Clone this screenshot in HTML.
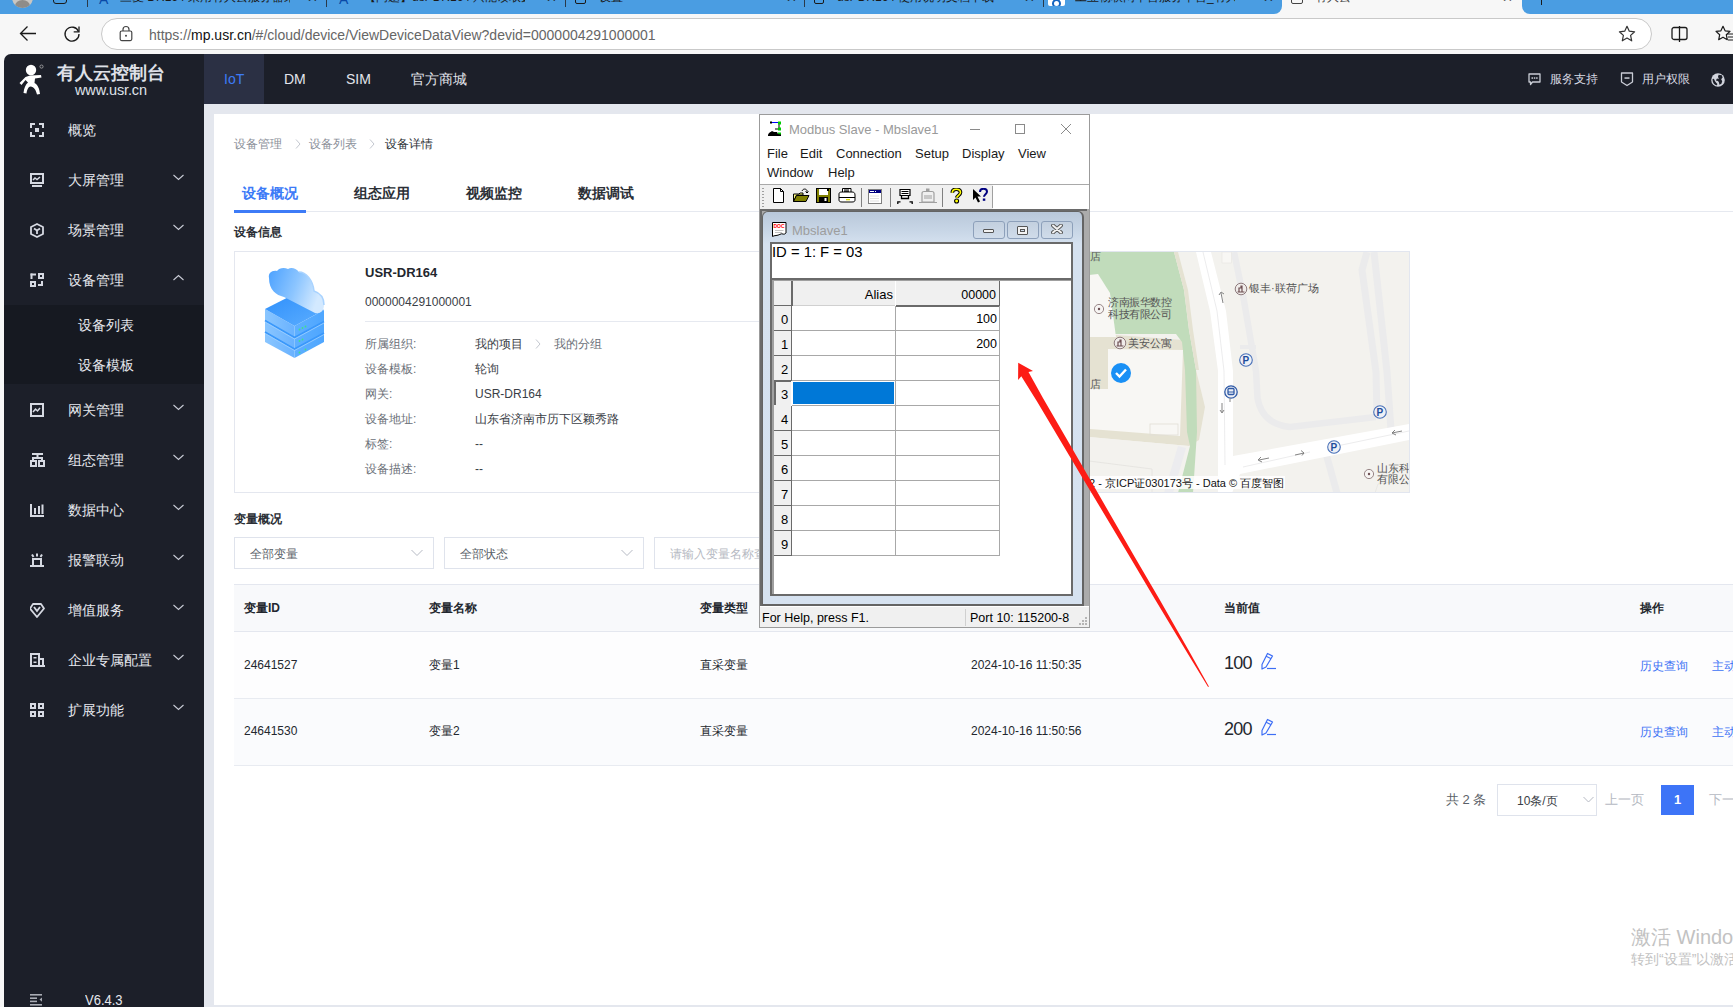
<!DOCTYPE html>
<html><head><meta charset="utf-8">
<style>
*{margin:0;padding:0;box-sizing:border-box}
html,body{width:1733px;height:1007px;overflow:hidden;background:#f7f7f7;font-family:"Liberation Sans",sans-serif;position:relative}
.a{position:absolute;white-space:nowrap}
/* browser */
#tabs{left:0;top:0;width:1733px;height:14px;background:#f7f7f7;overflow:hidden}
.tb{position:absolute;top:-4px;height:18px;background:#4a9de2}
#addr{left:0;top:14px;width:1733px;height:40px;background:#f7f7f7}
#url{left:101px;top:18px;width:1551px;height:32px;border:1px solid #c9c9c9;border-radius:16px;background:#fff}
/* app */
#app{left:4px;top:54px;width:1729px;height:953px;background:#e4e7ee;border-top-left-radius:7px;overflow:hidden}
#hdr{left:0;top:0;width:1729px;height:50px;background:#1c1f29}
#side{left:0;top:50px;width:200px;height:903px;background:#1c1f29}
.mi{position:absolute;left:0;width:200px;height:50px;color:#e6e8ee;font-size:14px}
.mi .t{position:absolute;left:64px;top:17px;line-height:16px}
.mi svg.ic{position:absolute;left:26px;top:18px}
.mi svg.ch{position:absolute;left:169px;top:19px}
#card{left:210px;top:60px;width:1519px;height:892px;background:#fff}
</style></head><body>
<div class="a" id="tabs">
  <div class="tb" style="left:0;width:1282px;border-bottom-right-radius:8px"></div>
  <div class="tb" style="left:1522px;width:211px;border-bottom-left-radius:8px"></div>
  <div class="a" style="left:12px;top:-13px;width:21px;height:21px;border-radius:50%;background:#c9c6c2;overflow:hidden"><div style="position:absolute;left:3px;top:13px;width:15px;height:12px;border-radius:50%;background:#8f8c88"></div></div>
  <div class="a" style="left:53px;top:-8px;width:14px;height:12px;border:1.5px solid #1a1a1a;border-radius:3px"></div>
  <div class="a" style="left:87px;top:0;width:1px;height:7px;background:#2a3a4a"></div>
  <div class="a" style="left:99px;top:-9px;font-size:14px;line-height:16px;color:#0b4aa8">A</div>
  <div class="a" style="left:120px;top:-10px;width:170px;overflow:hidden;font-size:12px;line-height:14px;color:#1a1a1a">三菱 DR164 采用有人云服务器采集数据的方法</div>
  <div class="a" style="left:307px;top:-9px;font-size:13px;line-height:14px;color:#1a1a1a">✕</div>
  <div class="a" style="left:326px;top:0;width:1px;height:7px;background:#2a3a4a"></div>
  <div class="a" style="left:339px;top:-9px;font-size:14px;line-height:16px;color:#0b4aa8">A</div>
  <div class="a" style="left:364px;top:-10px;width:161px;overflow:hidden;font-size:12px;line-height:14px;color:#1a1a1a">【问题】usr-DR164 只能读取数据</div>
  <div class="a" style="left:546px;top:-9px;font-size:13px;line-height:14px;color:#1a1a1a">✕</div>
  <div class="a" style="left:565px;top:0;width:1px;height:7px;background:#2a3a4a"></div>
  <div class="a" style="left:575px;top:-8px;width:11px;height:12px;border:1.5px solid #1a1a1a;border-radius:2px"></div>
  <div class="a" style="left:599px;top:-10px;font-size:12px;line-height:14px;color:#1a1a1a">设置</div>
  <div class="a" style="left:786px;top:-9px;font-size:13px;line-height:14px;color:#1a1a1a">✕</div>
  <div class="a" style="left:804px;top:0;width:1px;height:7px;background:#2a3a4a"></div>
  <div class="a" style="left:814px;top:-8px;width:10px;height:12px;border:1.5px solid #1a1a1a;border-radius:2px"></div>
  <div class="a" style="left:837px;top:-10px;width:178px;overflow:hidden;font-size:12px;line-height:14px;color:#1a1a1a">usr-DR164 使用说明文档下载</div>
  <div class="a" style="left:1024px;top:-9px;font-size:13px;line-height:14px;color:#1a1a1a">✕</div>
  <div class="a" style="left:1043px;top:0;width:1px;height:7px;background:#2a3a4a"></div>
  <div class="a" style="left:1048px;top:-4px;width:17px;height:10px;background:#fff;border-radius:2px;overflow:hidden"><div style="position:absolute;left:4px;top:3px;width:9px;height:9px;border-radius:50%;border:2px solid #1565c0"></div></div>
  <div class="a" style="left:1075px;top:-10px;width:160px;overflow:hidden;font-size:12px;line-height:14px;color:#1a1a1a">工业物联网平台服务平台_有人物联</div>
  <div class="a" style="left:1263px;top:-9px;font-size:13px;line-height:14px;color:#1a1a1a">✕</div>
  <div class="a" style="left:1291px;top:-8px;width:12px;height:12px;border:1.5px solid #444;border-radius:2px"></div>
  <div class="a" style="left:1315px;top:-10px;font-size:12px;line-height:14px;color:#444">有人云</div>
  <div class="a" style="left:1502px;top:-9px;font-size:13px;line-height:14px;color:#444">✕</div>
  <div class="a" style="left:1541px;top:0;width:1px;height:5px;background:#1a1a1a"></div>
</div>
<div class="a" id="addr"></div>
<div class="a" id="url"></div>
<svg class="a" style="left:19px;top:25px" width="18" height="17" viewBox="0 0 18 17"><path d="M17 8.5 H2 M8.5 1.5 L1.5 8.5 L8.5 15.5" fill="none" stroke="#1a1a1a" stroke-width="1.3"/></svg>
<svg class="a" style="left:63px;top:25px" width="18" height="18" viewBox="0 0 18 18"><path d="M15.5 6.5 A7 7 0 1 0 16 9" fill="none" stroke="#1a1a1a" stroke-width="1.3"/><path d="M16 1.5 V6.8 H10.7" fill="none" stroke="#1a1a1a" stroke-width="1.3"/></svg>
<svg class="a" style="left:119px;top:25px" width="14" height="17" viewBox="0 0 14 17"><rect x="1.2" y="6" width="11.6" height="9.6" rx="1.5" fill="none" stroke="#444" stroke-width="1.2"/><path d="M4 6 V4.5 A3 3 0 0 1 10 4.5 V6" fill="none" stroke="#444" stroke-width="1.2"/><circle cx="7" cy="10.8" r="1" fill="#444"/></svg>
<svg class="a" style="left:1618px;top:25px" width="18" height="18" viewBox="0 0 18 18"><path d="M9 1.3 L11.3 6.2 L16.6 6.8 L12.6 10.4 L13.7 15.8 L9 13.1 L4.3 15.8 L5.4 10.4 L1.4 6.8 L6.7 6.2 Z" fill="none" stroke="#333" stroke-width="1.2" stroke-linejoin="round"/></svg>
<svg class="a" style="left:1671px;top:26px" width="17" height="16" viewBox="0 0 17 16"><rect x="1" y="1.5" width="15" height="12" rx="2" fill="none" stroke="#1a1a1a" stroke-width="1.3"/><path d="M8.5 0 V16" stroke="#1a1a1a" stroke-width="1.3"/></svg>
<svg class="a" style="left:1715px;top:25px" width="18" height="18" viewBox="0 0 18 18"><path d="M8 1.3 L10.1 5.8 L15 6.4 L11.3 9.7 L12.3 14.7 L8 12.2 L3.7 14.7 L4.7 9.7 L1 6.4 L5.9 5.8 Z" fill="none" stroke="#1a1a1a" stroke-width="1.2" stroke-linejoin="round"/><path d="M12 9 H18 M13 12 H18 M13 15 H18" stroke="#1a1a1a" stroke-width="1.2"/></svg>

<div class="a" style="left:149px;top:26px;font-size:14px;line-height:18px;color:#666">https://<span style="color:#111">mp.usr.cn</span>/#/cloud/device/ViewDeviceDataView?devid=0000004291000001</div>

<div class="a" id="app">
  <div class="a" id="hdr"></div>
<svg class="a" style="left:14px;top:9px" width="30" height="33" viewBox="0 0 30 33">
 <circle cx="13" cy="7" r="5.2" fill="#fff"/>
 <circle cx="23.5" cy="3.6" r="1.6" fill="none" stroke="#bbb" stroke-width="0.7"/>
 <path d="M1.5 20 L7.5 14 L12 12.5 L23 12 L23.5 14.5 L17 15.5 L16.5 20 C20 22 21.5 26 22 31 L19 31.5 C18 27 16 24 12.5 23.5 C10 24 9 27 8.5 30.5 L5.5 30 C6 25 7.5 21.5 10 19.5 L7.5 17 L3.5 22 Z" fill="#fff"/>
</svg>
<div class="a" style="left:53px;top:9px;font-size:18px;line-height:20px;font-weight:bold;color:#dfe1e8">有人云控制台</div>
<div class="a" style="left:71px;top:28px;font-size:14.5px;line-height:16px;color:#dfe1e8;letter-spacing:-0.15px">www.usr.cn</div>
<div class="a" style="left:200px;top:0;width:60px;height:50px;background:#2b3044"></div>
<div class="a" style="left:220px;top:17px;font-size:14px;line-height:16px;color:#3d7bf7">IoT</div>
<div class="a" style="left:280px;top:17px;font-size:14px;line-height:16px;color:#e3e5ec">DM</div>
<div class="a" style="left:342px;top:17px;font-size:14px;line-height:16px;color:#e3e5ec">SIM</div>
<div class="a" style="left:407px;top:17px;font-size:14px;line-height:16px;color:#e3e5ec">官方商城</div>
<svg class="a" style="left:1524px;top:19px" width="13" height="13" viewBox="0 0 13 13"><path d="M1 1 H12 V9 H4.5 L2.5 11.5 V9 H1 Z" fill="none" stroke="#c9ccd5" stroke-width="1.3" stroke-linejoin="round"/><rect x="3.5" y="4.3" width="1.5" height="1.5" fill="#c9ccd5"/><rect x="5.8" y="4.3" width="1.5" height="1.5" fill="#c9ccd5"/><rect x="8.1" y="4.3" width="1.5" height="1.5" fill="#c9ccd5"/></svg>
<div class="a" style="left:1546px;top:17px;font-size:12px;line-height:16px;color:#d8dae2">服务支持</div>
<svg class="a" style="left:1616px;top:18px" width="14" height="15" viewBox="0 0 14 15"><path d="M1.5 1 H12.5 V10 L7 13.5 L1.5 10 Z" fill="none" stroke="#c9ccd5" stroke-width="1.3" stroke-linejoin="round"/><rect x="4.5" y="5.3" width="5" height="1.5" fill="#c9ccd5"/></svg>
<div class="a" style="left:1638px;top:17px;font-size:12px;line-height:16px;color:#d8dae2">用户权限</div>
<svg class="a" style="left:1707px;top:18.5px" width="14" height="14" viewBox="0 0 14 14"><circle cx="7" cy="7" r="6.8" fill="#d0d3dc"/><path d="M1.5 6 L3 5.8 C3.5 8 5 9.8 6.5 11 L5.5 12.6 C3 11.5 1.4 9.5 1.5 6 Z" fill="#1c1f29"/><path d="M7.6 1.8 L10.8 2.3 L11.6 4.6 L10.2 6.2 L11.2 8.3 L10.4 10.8 L8.4 11.8 L8 9.4 L7 8 L4.8 7.4 L6 5.6 L7.8 5.9 L7 3.8 Z" fill="#1c1f29"/></svg>
  <div class="a" id="side"></div>
<div class="a" style="left:0;top:251px;width:200px;height:79px;background:#161921"></div><div class="mi" style="top:246px"><span class="t" style="left:74px">设备列表</span></div><div class="mi" style="top:286px"><span class="t" style="left:74px">设备模板</span></div><div class="mi" style="top:51px"><svg class="ic" width="15" height="15" viewBox="0 0 15 15" fill="#d6d9e2"><rect x="0" y="0" width="5" height="2"/><rect x="0" y="0" width="2" height="5"/><rect x="9" y="0" width="5" height="2"/><rect x="12" y="0" width="2" height="5"/><rect x="0" y="12" width="5" height="2"/><rect x="0" y="9" width="2" height="5"/><rect x="9" y="12" width="5" height="2"/><rect x="12" y="9" width="2" height="5"/><rect x="5" y="5" width="4" height="4"/></svg><span class="t">概览</span></div>
<div class="mi" style="top:101px"><svg class="ic" width="15" height="15" viewBox="0 0 15 15" fill="#d6d9e2"><rect x="1" y="1" width="12" height="9" fill="none" stroke="#d6d9e2" stroke-width="2"/><path d="M3 7 L5 5 L7 6.5 L10 4" fill="none" stroke="#d6d9e2" stroke-width="1.5"/><rect x="2" y="12" width="10" height="2"/></svg><span class="t">大屏管理</span><svg class="ch" width="11" height="7" viewBox="0 0 11 7"><path d="M0.5 1 L5.5 5.5 L10.5 1" fill="none" stroke="#c9ccd6" stroke-width="1.1"/></svg></div>
<div class="mi" style="top:151px"><svg class="ic" width="15" height="15" viewBox="0 0 15 15" fill="#d6d9e2"><path d="M7 1 L13 4 L13 11 L7 14 L1 11 L1 4 Z" fill="none" stroke="#d6d9e2" stroke-width="1.8" stroke-linejoin="round"/><path d="M4 5.5 L7 7.5 L10 5.5 M7 7.5 V11" fill="none" stroke="#d6d9e2" stroke-width="1.8"/></svg><span class="t">场景管理</span><svg class="ch" width="11" height="7" viewBox="0 0 11 7"><path d="M0.5 1 L5.5 5.5 L10.5 1" fill="none" stroke="#c9ccd6" stroke-width="1.1"/></svg></div>
<div class="mi" style="top:201px"><svg class="ic" width="15" height="15" viewBox="0 0 15 15" fill="#d6d9e2"><rect x="0.5" y="0.5" width="5.5" height="2"/><rect x="0.5" y="0.5" width="2" height="5.5"/><path d="M8 0 H14 V6 H8 Z M10 2 V4 H12 V2 Z" fill-rule="evenodd"/><path d="M0 8 H6 V14 H0 Z M2 10 V12 H4 V10 Z" fill-rule="evenodd"/><rect x="8" y="11" width="5" height="2"/><rect x="11" y="8" width="2" height="5"/></svg><span class="t">设备管理</span><svg class="ch" width="11" height="7" viewBox="0 0 11 7"><path d="M0.5 6 L5.5 1.5 L10.5 6" fill="none" stroke="#c9ccd6" stroke-width="1.1"/></svg></div>
<div class="mi" style="top:331px"><svg class="ic" width="15" height="15" viewBox="0 0 15 15" fill="#d6d9e2"><rect x="1" y="1" width="12" height="12" fill="none" stroke="#d6d9e2" stroke-width="2"/><path d="M3 9 L5.5 6 L7.5 8 L10 5" fill="none" stroke="#d6d9e2" stroke-width="1.5"/></svg><span class="t">网关管理</span><svg class="ch" width="11" height="7" viewBox="0 0 11 7"><path d="M0.5 1 L5.5 5.5 L10.5 1" fill="none" stroke="#c9ccd6" stroke-width="1.1"/></svg></div>
<div class="mi" style="top:381px"><svg class="ic" width="15" height="15" viewBox="0 0 15 15" fill="#d6d9e2"><rect x="2" y="0" width="11" height="2"/><rect x="6.5" y="0" width="2" height="5"/><path d="M3 8 V5 H12 V8" fill="none" stroke="#d6d9e2" stroke-width="2"/><rect x="1" y="8" width="5" height="5" fill="none" stroke="#d6d9e2" stroke-width="2"/><rect x="9" y="8" width="5" height="5" fill="none" stroke="#d6d9e2" stroke-width="2"/></svg><span class="t">组态管理</span><svg class="ch" width="11" height="7" viewBox="0 0 11 7"><path d="M0.5 1 L5.5 5.5 L10.5 1" fill="none" stroke="#c9ccd6" stroke-width="1.1"/></svg></div>
<div class="mi" style="top:431px"><svg class="ic" width="15" height="15" viewBox="0 0 15 15" fill="#d6d9e2"><path d="M1 1 V13 H14" fill="none" stroke="#d6d9e2" stroke-width="2"/><rect x="4" y="5" width="2" height="6"/><rect x="8" y="3" width="2" height="8"/><rect x="11.5" y="1.5" width="2" height="9.5"/></svg><span class="t">数据中心</span><svg class="ch" width="11" height="7" viewBox="0 0 11 7"><path d="M0.5 1 L5.5 5.5 L10.5 1" fill="none" stroke="#c9ccd6" stroke-width="1.1"/></svg></div>
<div class="mi" style="top:481px"><svg class="ic" width="15" height="15" viewBox="0 0 15 15" fill="#d6d9e2"><path d="M2 1.5 L3.5 4 M7 0.5 V3.5 M12 1.5 L10.5 4" fill="none" stroke="#d6d9e2" stroke-width="2"/><path d="M3 13 V6 H11 V13" fill="none" stroke="#d6d9e2" stroke-width="2"/><rect x="0" y="12" width="14" height="2"/></svg><span class="t">报警联动</span><svg class="ch" width="11" height="7" viewBox="0 0 11 7"><path d="M0.5 1 L5.5 5.5 L10.5 1" fill="none" stroke="#c9ccd6" stroke-width="1.1"/></svg></div>
<div class="mi" style="top:531px"><svg class="ic" width="15" height="15" viewBox="0 0 15 15" fill="#d6d9e2"><path d="M3 1 H11 L14 5.5 L7 14 L0 5.5 Z" fill="none" stroke="#d6d9e2" stroke-width="1.8" stroke-linejoin="round"/><path d="M4 4 L7 8 L10 4" fill="none" stroke="#d6d9e2" stroke-width="1.8"/></svg><span class="t">增值服务</span><svg class="ch" width="11" height="7" viewBox="0 0 11 7"><path d="M0.5 1 L5.5 5.5 L10.5 1" fill="none" stroke="#c9ccd6" stroke-width="1.1"/></svg></div>
<div class="mi" style="top:581px"><svg class="ic" width="15" height="15" viewBox="0 0 15 15" fill="#d6d9e2"><path d="M0 13 H15 M1 13 V1 H9 V13 M9 6 H13 V13" fill="none" stroke="#d6d9e2" stroke-width="2"/><rect x="3.5" y="4" width="3" height="1.5"/><rect x="3.5" y="8.5" width="3" height="1.5"/></svg><span class="t">企业专属配置</span><svg class="ch" width="11" height="7" viewBox="0 0 11 7"><path d="M0.5 1 L5.5 5.5 L10.5 1" fill="none" stroke="#c9ccd6" stroke-width="1.1"/></svg></div>
<div class="mi" style="top:631px"><svg class="ic" width="15" height="15" viewBox="0 0 15 15" fill="#d6d9e2"><path d="M0 0 H6 V6 H0 Z M2 2 V4 H4 V2 Z M8 0 H14 V6 H8 Z M10 2 V4 H12 V2 Z M0 8 H6 V14 H0 Z M2 10 V12 H4 V10 Z M8 8 H14 V14 H8 Z M10 10 V12 H12 V10 Z" fill-rule="evenodd"/></svg><span class="t">扩展功能</span><svg class="ch" width="11" height="7" viewBox="0 0 11 7"><path d="M0.5 1 L5.5 5.5 L10.5 1" fill="none" stroke="#c9ccd6" stroke-width="1.1"/></svg></div><svg class="a" style="left:26px;top:940px" width="13" height="12" viewBox="0 0 13 12" fill="#a9acb4"><rect x="0" y="0" width="12" height="1.6"/><rect x="0" y="3.4" width="7" height="1.6"/><rect x="0" y="6.6" width="7" height="1.6"/><rect x="0" y="10" width="12" height="1.6"/><path d="M12 3.5 L9.5 5.6 L12 7.7Z"/></svg>
<div class="a" style="left:81px;top:938px;font-size:13px;line-height:16px;color:#e6e8ee;transform:scaleY(1.08);transform-origin:0 0">V6.4.3</div>
  <div class="a" id="card"></div>
</div>

<!-- content -->
<div class="a" style="left:234px;top:137px;font-size:12px;line-height:14px;color:#8a8f99">设备管理</div>
<svg class="a" style="left:295px;top:139px" width="6" height="10" viewBox="0 0 6 10"><path d="M1 0.5 L5 5 L1 9.5" fill="none" stroke="#c3c7cf" stroke-width="1"/></svg>
<div class="a" style="left:309px;top:137px;font-size:12px;line-height:14px;color:#8a8f99">设备列表</div>
<svg class="a" style="left:369px;top:139px" width="6" height="10" viewBox="0 0 6 10"><path d="M1 0.5 L5 5 L1 9.5" fill="none" stroke="#c3c7cf" stroke-width="1"/></svg>
<div class="a" style="left:385px;top:137px;font-size:12px;line-height:14px;color:#2b2f36">设备详情</div>

<div class="a" style="left:234px;top:211px;width:1499px;height:1px;background:#e6e9f0"></div>
<div class="a" style="left:234px;top:210px;width:72px;height:3px;background:#3d7bf7"></div>
<div class="a" style="left:242px;top:185px;font-size:14px;line-height:16px;font-weight:bold;color:#3d7bf7">设备概况</div>
<div class="a" style="left:354px;top:185px;font-size:14px;line-height:16px;font-weight:bold;color:#2b2f36">组态应用</div>
<div class="a" style="left:466px;top:185px;font-size:14px;line-height:16px;font-weight:bold;color:#2b2f36">视频监控</div>
<div class="a" style="left:578px;top:185px;font-size:14px;line-height:16px;font-weight:bold;color:#2b2f36">数据调试</div>

<div class="a" style="left:234px;top:225px;font-size:12px;line-height:14px;font-weight:bold;color:#2b2f36">设备信息</div>
<div class="a" style="left:234px;top:251px;width:1176px;height:242px;border:1px solid #e4e7ef"></div>

<!-- device icon placeholder -->
<svg class="a" style="left:262px;top:265px" width="66" height="96" viewBox="262 265 66 96">
<defs>
<linearGradient id="lf" x1="0" y1="0" x2="1" y2="0"><stop offset="0" stop-color="#8ac6ff"/><stop offset="1" stop-color="#69b2ff"/></linearGradient>
<linearGradient id="rf" x1="0" y1="0" x2="1" y2="0"><stop offset="0" stop-color="#5fb0ff"/><stop offset="1" stop-color="#4ea6ff"/></linearGradient>
<linearGradient id="tf" x1="0" y1="0" x2="1" y2="1"><stop offset="0" stop-color="#2e8ffb"/><stop offset="1" stop-color="#5caeff"/></linearGradient>
<linearGradient id="cl" x1="0" y1="0" x2="1" y2="0.3"><stop offset="0" stop-color="#4ba1ff"/><stop offset="0.55" stop-color="#8cc5ff"/><stop offset="1" stop-color="#d3e9ff"/></linearGradient>
</defs>
<polygon points="265,309 294.5,326 294.5,358 265,342" fill="url(#lf)"/>
<polygon points="294.5,326 324,310 324,342 294.5,358" fill="url(#rf)"/>
<polygon points="265,309 294.5,294 324,310 294.5,326" fill="url(#tf)"/>
<path d="M265 320.5 L294.5 337.5 L324 321.5 M265 332 L294.5 349 L324 333" fill="none" stroke="#3a98fb" stroke-width="1.8"/>
<path d="M265 322 L294.5 339 L324 323 M265 333.5 L294.5 350.5 L324 334.5" fill="none" stroke="#9fd0ff" stroke-width="0.8"/>
<g fill="#3fe08a"><circle cx="299.5" cy="329.5" r="0.9"/><circle cx="302.5" cy="328" r="0.9"/><circle cx="305.5" cy="326.5" r="0.9"/><circle cx="299.5" cy="341" r="0.9"/><circle cx="302.5" cy="339.5" r="0.9"/><circle cx="299.5" cy="352.5" r="0.9"/><circle cx="305.5" cy="349.5" r="0.9"/></g>
<path d="M269 278 C268 273 272 270 277 271 C279 268 284 267 288 269 C291 267 296 268 299 272 C306 272 313 280 314 291 C320 293 324 298 324 305 C324 311 320 314 315 313 L284 297 C276 295 269 290 269 278 Z" fill="url(#cl)"/>
<path d="M299 272 C306 272 313 280 314 291 C320 293 324 298 324 305" fill="none" stroke="#a9d3ff" stroke-width="1.5"/>
</svg>

<div class="a" style="left:365px;top:265px;font-size:13px;line-height:15px;font-weight:bold;color:#23272e">USR-DR164</div>
<div class="a" style="left:365px;top:295px;font-size:12px;line-height:14px;color:#3a3e46">0000004291000001</div>
<div class="a" style="left:365px;top:321px;width:724px;height:1px;background:#e6e9f0"></div>
<div class="a" style="left:365px;top:337px;font-size:12px;line-height:14px;color:#6b7078">所属组织:</div>
<div class="a" style="left:365px;top:362px;font-size:12px;line-height:14px;color:#6b7078">设备模板:</div>
<div class="a" style="left:365px;top:387px;font-size:12px;line-height:14px;color:#6b7078">网关:</div>
<div class="a" style="left:365px;top:412px;font-size:12px;line-height:14px;color:#6b7078">设备地址:</div>
<div class="a" style="left:365px;top:437px;font-size:12px;line-height:14px;color:#6b7078">标签:</div>
<div class="a" style="left:365px;top:462px;font-size:12px;line-height:14px;color:#6b7078">设备描述:</div>
<div class="a" style="left:475px;top:337px;font-size:12px;line-height:14px;color:#3a3e46">我的项目</div>
<div class="a" style="left:475px;top:362px;font-size:12px;line-height:14px;color:#3a3e46">轮询</div>
<div class="a" style="left:475px;top:387px;font-size:12px;line-height:14px;color:#3a3e46">USR-DR164</div>
<div class="a" style="left:475px;top:412px;font-size:12px;line-height:14px;color:#3a3e46">山东省济南市历下区颖秀路</div>
<div class="a" style="left:475px;top:437px;font-size:12px;line-height:14px;color:#3a3e46">--</div>
<div class="a" style="left:475px;top:462px;font-size:12px;line-height:14px;color:#3a3e46">--</div>
<svg class="a" style="left:535px;top:339px" width="6" height="10" viewBox="0 0 6 10"><path d="M1 0.5 L5 5 L1 9.5" fill="none" stroke="#c3c7cf" stroke-width="1"/></svg><div class="a" style="left:554px;top:337px;font-size:12px;line-height:14px;color:#6b7078">我的分组</div>
<svg class="a" style="left:0;top:0" width="1733" height="1007" viewBox="0 0 1733 1007">
<defs><clipPath id="mc"><rect x="1089" y="252" width="320" height="240"/></clipPath></defs>
<rect x="1088.5" y="251.5" width="321" height="241" fill="#f3f2ee" stroke="#e2e6ef" stroke-width="1"/>
<g clip-path="url(#mc)">
 <polygon points="1089,333 1183,340 1196,370 1205,407 1199,440 1189,446 1089,437" fill="#e5e2d2"/>
 <polygon points="1089,437 1189,446 1190,493 1089,493" fill="#f3f2ee"/>
 <polygon points="1089,252 1174,252 1184,290 1189,330 1196,370 1197,432 1193,493 1178,493 1190,446 1187,432 1185,370 1182,342 1176,334 1089,334" fill="#c1dcbb"/>
 <polygon points="1174,252 1178,252 1188,290 1193,330 1199,370 1196,370 1189,330 1184,290" fill="#e5e2d2"/>
 <polygon points="1089,275 1098,274 1110,293 1116,337 1089,337" fill="#f8f7f4"/>
 <polygon points="1108,349 1183,350 1180,436 1090,429 1090,389 1108,389" fill="#f8f7f4"/>
 <rect x="1150" y="424" width="28" height="11" fill="none" stroke="#e0ded6" stroke-width="0.8"/>
 <path d="M1089 461 L1152 469 L1152 493" fill="none" stroke="#e3e2de" stroke-width="0.8"/>
 <polygon points="1178,446 1186,448 1173,493 1164,493" fill="#ececef"/>
 <path d="M1234 252 L1243.6 298.5 L1256 371 L1257.5 398 Q1262 424 1290 427 L1376 417" fill="none" stroke="#ebebec" stroke-width="6.5"/>
 <rect x="1222" y="252" width="9.5" height="11" fill="#f8f7f4" stroke="#e6e5e1" stroke-width="0.6"/>
 <path d="M1367 252 L1362 270 L1376 372 L1377 417" fill="none" stroke="#ebebec" stroke-width="7"/>
 <path d="M1374 252 L1387 372 L1391 430" fill="none" stroke="#ebebec" stroke-width="7"/>
 <path d="M1240 347 L1256 347" stroke="#ebebec" stroke-width="4"/>
 <path d="M1325 450 L1337 493" stroke="#ebebec" stroke-width="7"/>
 <path d="M1375 493 L1378 484 L1392 482" fill="none" stroke="#e6e5e1" stroke-width="0.8"/>
 <polygon points="1196,252 1211,252 1226,311 1233,371 1233,456 1409,424 1409,440 1240,474 1232,493 1218,493 1218,371 1210,311" fill="#fff"/>
 <path d="M1203 252 L1217 311 L1224 371 L1225 465" fill="none" stroke="#e7e7e9" stroke-width="0.8"/>
 <path d="M1243 467 L1310 452 M1332 447 L1409 431" fill="none" stroke="#e7e7e9" stroke-width="0.8"/>
 <path d="M1221 293 L1223 303 M1219 295 L1221 292 L1224 294" fill="none" stroke="#777" stroke-width="0.9"/>
 <path d="M1222 403 L1222 412 M1220 410 L1222 413 L1224 410" fill="none" stroke="#777" stroke-width="0.9"/>
 <path d="M1259 460 L1269 458 M1261 457 L1258 460 L1262 462" fill="none" stroke="#777" stroke-width="0.9"/>
 <path d="M1295 455 L1304 453 M1301 450.5 L1304 453 L1302 455.5" fill="none" stroke="#777" stroke-width="0.9"/>
 <path d="M1392 433 L1402 431 M1395 430 L1392 433 L1396 435" fill="none" stroke="#777" stroke-width="0.9"/>
 <text x="1090" y="260" font-family="Liberation Sans" font-size="11" fill="#555">店</text>
 <circle cx="1099" cy="309" r="4.6" fill="#f7f5f3" stroke="#8d7a7c" stroke-width="0.9"/><circle cx="1099" cy="309" r="1.2" fill="#6d4f52"/>
 <text x="1108" y="306" font-family="Liberation Sans" font-size="11" fill="#555" letter-spacing="-0.4">济南振华数控</text>
 <text x="1108" y="318" font-family="Liberation Sans" font-size="11" fill="#555" letter-spacing="-0.4">科技有限公司</text>
 <circle cx="1120" cy="343" r="5.8" fill="#f0ecea" stroke="#8d7a7c" stroke-width="1"/><path d="M1116.5 346 H1123.5 M1118 346 V342 H1120 V340 H1121 V346" fill="none" stroke="#6d4f52" stroke-width="1.2"/>
 <text x="1128" y="347" font-family="Liberation Sans" font-size="11" fill="#555">美安公寓</text>
 <text x="1090" y="388" font-family="Liberation Sans" font-size="11" fill="#555">店</text>
 <circle cx="1241" cy="289" r="5.8" fill="#f0ecea" stroke="#8d7a7c" stroke-width="1"/><path d="M1237.5 292 H1244.5 M1239 292 V288 H1241 V286 H1242 V292" fill="none" stroke="#6d4f52" stroke-width="1.2"/>
 <text x="1249" y="292" font-family="Liberation Sans" font-size="11" fill="#555">银丰·联荷广场</text>
 <circle cx="1369" cy="474" r="4.6" fill="#f7f5f3" stroke="#8d7a7c" stroke-width="0.9"/><circle cx="1369" cy="474" r="1.2" fill="#6d4f52"/>
 <text x="1377" y="472" font-family="Liberation Sans" font-size="11" fill="#555">山东科技</text>
 <text x="1377" y="483" font-family="Liberation Sans" font-size="11" fill="#555">有限公司</text>
 <circle cx="1246" cy="360" r="6.3" fill="#eef0f6" stroke="#4a72b8" stroke-width="1.1"/><text x="1242.6" y="363.6" font-family="Liberation Sans" font-weight="bold" font-size="10" fill="#1d4d9c">P</text><circle cx="1380" cy="412" r="6.3" fill="#eef0f6" stroke="#4a72b8" stroke-width="1.1"/><text x="1376.6" y="415.6" font-family="Liberation Sans" font-weight="bold" font-size="10" fill="#1d4d9c">P</text><circle cx="1334" cy="447" r="6.3" fill="#eef0f6" stroke="#4a72b8" stroke-width="1.1"/><text x="1330.6" y="450.6" font-family="Liberation Sans" font-weight="bold" font-size="10" fill="#1d4d9c">P</text>
 <circle cx="1231" cy="392" r="6.2" fill="#eef0f6" stroke="#2f5aa6" stroke-width="1.3"/><rect x="1228" y="388.5" width="6" height="6" rx="1" fill="none" stroke="#2f5aa6" stroke-width="1.3"/><path d="M1228 392 H1234" stroke="#2f5aa6" stroke-width="1"/><path d="M1230 398 V402" stroke="#888" stroke-width="1"/>
 <circle cx="1121" cy="373" r="10" fill="#1a90f5"/><path d="M1116 373 L1119.5 376.5 L1126 369.5" fill="none" stroke="#fff" stroke-width="2.4"/>
 <rect x="1089" y="476" width="196" height="13" fill="#fff" fill-opacity="0.85"/>
 <text x="1089" y="487" font-family="Liberation Sans" font-size="11" fill="#111">2 - 京ICP证030173号 - Data © 百度智图</text>
</g>
</svg>

<div class="a" style="left:234px;top:512px;font-size:12px;line-height:14px;font-weight:bold;color:#2b2f36">变量概况</div>
<div class="a" style="left:234px;top:537px;width:200px;height:32px;border:1px solid #dfe3ec"></div>
<div class="a" style="left:250px;top:547px;font-size:12px;line-height:14px;color:#5a5f68">全部变量</div>
<svg class="a" style="left:411px;top:549px" width="12" height="8" viewBox="0 0 12 8"><path d="M0.5 1 L6 6.5 L11.5 1" fill="none" stroke="#b5b9c3" stroke-width="1"/></svg>
<div class="a" style="left:444px;top:537px;width:200px;height:32px;border:1px solid #dfe3ec"></div>
<div class="a" style="left:460px;top:547px;font-size:12px;line-height:14px;color:#5a5f68">全部状态</div>
<svg class="a" style="left:621px;top:549px" width="12" height="8" viewBox="0 0 12 8"><path d="M0.5 1 L6 6.5 L11.5 1" fill="none" stroke="#b5b9c3" stroke-width="1"/></svg>
<div class="a" style="left:654px;top:537px;width:200px;height:32px;border:1px solid #dfe3ec"></div>
<div class="a" style="left:670px;top:547px;font-size:12px;line-height:14px;color:#b5b9c2">请输入变量名称查询</div>

<div class="a" style="left:234px;top:584px;width:1499px;height:48px;background:#f8f9fb;border-top:1px solid #e4e7ef;border-bottom:1px solid #e4e7ef"></div>
<div class="a" style="left:244px;top:601px;font-size:12px;line-height:14px;font-weight:bold;color:#23272e">变量ID</div>
<div class="a" style="left:429px;top:601px;font-size:12px;line-height:14px;font-weight:bold;color:#23272e">变量名称</div>
<div class="a" style="left:700px;top:601px;font-size:12px;line-height:14px;font-weight:bold;color:#23272e">变量类型</div>
<div class="a" style="left:971px;top:601px;font-size:12px;line-height:14px;font-weight:bold;color:#23272e">更新时间</div>
<div class="a" style="left:1224px;top:601px;font-size:12px;line-height:14px;font-weight:bold;color:#23272e">当前值</div>
<div class="a" style="left:1640px;top:601px;font-size:12px;line-height:14px;font-weight:bold;color:#23272e">操作</div>

<div class="a" style="left:234px;top:632px;width:1499px;height:66px;background:#fdfdfe"></div>
<div class="a" style="left:234px;top:698px;width:1499px;height:1px;background:#e8ebf1"></div>
<div class="a" style="left:234px;top:699px;width:1499px;height:66px;background:#fafbfd"></div>
<div class="a" style="left:234px;top:765px;width:1499px;height:1px;background:#e8ebf1"></div>
<div class="a" style="left:244px;top:658px;font-size:12px;line-height:14px;color:#23272e">24641527</div>
<div class="a" style="left:429px;top:658px;font-size:12px;line-height:14px;color:#23272e">变量1</div>
<div class="a" style="left:700px;top:658px;font-size:12px;line-height:14px;color:#23272e">直采变量</div>
<div class="a" style="left:971px;top:658px;font-size:12px;line-height:14px;color:#23272e">2024-10-16 11:50:35</div>
<div class="a" style="left:1224px;top:653px;font-size:18px;line-height:20px;letter-spacing:-0.8px;color:#23272e">100</div>
<svg class="a" style="left:1259px;top:651px" width="20" height="20" viewBox="0 0 20 20"><path d="M8.5 2.5 L13.5 5 L7 16 L3 18 L3 13.5 Z M7.2 5.2 L12.2 7.7" fill="none" stroke="#3d6ef5" stroke-width="1.2" stroke-linejoin="round"/><path d="M8 17.5 H17" stroke="#3d6ef5" stroke-width="1.2"/></svg>
<div class="a" style="left:1640px;top:659px;font-size:12px;line-height:14px;color:#3d72f5">历史查询</div>
<div class="a" style="left:1712px;top:659px;font-size:12px;line-height:14px;color:#3d72f5">主动采集</div>
<div class="a" style="left:244px;top:724px;font-size:12px;line-height:14px;color:#23272e">24641530</div>
<div class="a" style="left:429px;top:724px;font-size:12px;line-height:14px;color:#23272e">变量2</div>
<div class="a" style="left:700px;top:724px;font-size:12px;line-height:14px;color:#23272e">直采变量</div>
<div class="a" style="left:971px;top:724px;font-size:12px;line-height:14px;color:#23272e">2024-10-16 11:50:56</div>
<div class="a" style="left:1224px;top:719px;font-size:18px;line-height:20px;letter-spacing:-0.8px;color:#23272e">200</div>
<svg class="a" style="left:1259px;top:717px" width="20" height="20" viewBox="0 0 20 20"><path d="M8.5 2.5 L13.5 5 L7 16 L3 18 L3 13.5 Z M7.2 5.2 L12.2 7.7" fill="none" stroke="#3d6ef5" stroke-width="1.2" stroke-linejoin="round"/><path d="M8 17.5 H17" stroke="#3d6ef5" stroke-width="1.2"/></svg>
<div class="a" style="left:1640px;top:725px;font-size:12px;line-height:14px;color:#3d72f5">历史查询</div>
<div class="a" style="left:1712px;top:725px;font-size:12px;line-height:14px;color:#3d72f5">主动采集</div>

<div class="a" style="left:1446px;top:792px;font-size:13px;line-height:16px;color:#5a5f68">共 2 条</div>
<div class="a" style="left:1497px;top:784px;width:100px;height:32px;border:1px solid #dfe3ec"></div>
<div class="a" style="left:1517px;top:794px;font-size:12px;line-height:14px;color:#3a3e46">10条/页</div>
<svg class="a" style="left:1583px;top:796px" width="11" height="7" viewBox="0 0 11 7"><path d="M0.5 1 L5.5 6 L10.5 1" fill="none" stroke="#b5b9c3" stroke-width="1"/></svg>
<div class="a" style="left:1605px;top:792px;font-size:13px;line-height:16px;color:#b5b9c2">上一页</div>
<div class="a" style="left:1661px;top:785px;width:33px;height:30px;background:#3d74f7"></div>
<div class="a" style="left:1661px;top:792px;width:33px;text-align:center;font-size:13px;line-height:16px;font-weight:bold;color:#fff">1</div>
<div class="a" style="left:1709px;top:792px;font-size:13px;line-height:16px;color:#b5b9c2">下一页</div>

<div class="a" style="left:1631px;top:925px;font-size:20px;line-height:24px;color:#c2c2c2">激活 Windows</div>
<div class="a" style="left:1631px;top:951px;font-size:14px;line-height:17px;color:#c2c2c2">转到“设置”以激活Windows。</div>
<div class="a" style="left:214px;top:1005px;width:1519px;height:2px;background:#e4e7ee"></div>

<div class="a" style="left:759px;top:114px;width:331px;height:514px;background:#fff;border:1px solid #9b9b9b"></div>
<svg class="a" style="left:768px;top:121px" width="15" height="15" viewBox="0 0 15 15">
<path d="M3 1.5 H11 M11 1.5 V8 M11 8 H7" fill="none" stroke="#000" stroke-width="1"/><path d="M3 1.5 H10" stroke="#0000ff" stroke-width="1"/>
<rect x="10" y="0.5" width="3" height="3" fill="#0c0"/><rect x="10" y="6.5" width="3" height="3" fill="#0c0"/><rect x="10" y="11.5" width="3" height="3" fill="#0c0"/>
<path d="M0 14 C1 11 3 11 4 10 L6 11 L9 11 L10 13 L13 13.5 V15 H0 Z" fill="#000"/><rect x="2" y="0.5" width="2" height="2" fill="#000"/>
</svg>
<div class="a" style="left:789px;top:121px;font-size:13px;line-height:17px;color:#9a9a9a">Modbus Slave - Mbslave1</div>
<div class="a" style="left:970px;top:129px;width:10px;height:1px;background:#8a8a8a"></div>
<div class="a" style="left:1015px;top:124px;width:10px;height:10px;border:1px solid #8a8a8a"></div>
<svg class="a" style="left:1061px;top:124px" width="10" height="10" viewBox="0 0 10 10"><path d="M0 0 L10 10 M10 0 L0 10" stroke="#8a8a8a" stroke-width="1"/></svg>
<div class="a" style="left:767px;top:146px;font-size:13px;line-height:16px;color:#1a1a1a">File</div>
<div class="a" style="left:800px;top:146px;font-size:13px;line-height:16px;color:#1a1a1a">Edit</div>
<div class="a" style="left:836px;top:146px;font-size:13px;line-height:16px;color:#1a1a1a">Connection</div>
<div class="a" style="left:915px;top:146px;font-size:13px;line-height:16px;color:#1a1a1a">Setup</div>
<div class="a" style="left:962px;top:146px;font-size:13px;line-height:16px;color:#1a1a1a">Display</div>
<div class="a" style="left:1018px;top:146px;font-size:13px;line-height:16px;color:#1a1a1a">View</div>
<div class="a" style="left:767px;top:165px;font-size:13px;line-height:16px;color:#1a1a1a">Window</div>
<div class="a" style="left:828px;top:165px;font-size:13px;line-height:16px;color:#1a1a1a">Help</div>
<div class="a" style="left:760px;top:184px;width:329px;height:1px;background:#a9a9a9"></div>
<div class="a" style="left:760px;top:185px;width:233px;height:24px;background:#f0f0f0"></div>
<div class="a" style="left:992px;top:186px;width:1px;height:22px;background:#a0a0a0"></div>
<div class="a" style="left:762px;top:188px;width:2px;height:1px;background:#a0a0a0"></div>
<div class="a" style="left:762px;top:191px;width:2px;height:1px;background:#a0a0a0"></div>
<div class="a" style="left:762px;top:194px;width:2px;height:1px;background:#a0a0a0"></div>
<div class="a" style="left:762px;top:197px;width:2px;height:1px;background:#a0a0a0"></div>
<div class="a" style="left:762px;top:200px;width:2px;height:1px;background:#a0a0a0"></div>
<div class="a" style="left:762px;top:203px;width:2px;height:1px;background:#a0a0a0"></div>
<div class="a" style="left:762px;top:206px;width:2px;height:1px;background:#a0a0a0"></div>
<div class="a" style="left:861px;top:188px;width:1px;height:19px;background:#808080"></div>
<div class="a" style="left:890px;top:188px;width:1px;height:19px;background:#808080"></div>
<div class="a" style="left:942px;top:188px;width:1px;height:19px;background:#808080"></div>
<svg class="a" style="left:772px;top:188px" width="13" height="15" viewBox="0 0 13 15"><path d="M1.5 0.5 H8.5 L11.5 3.5 V14.5 H1.5 Z" fill="#fff" stroke="#000" stroke-width="1"/><path d="M8.5 0.5 V3.5 H11.5" fill="none" stroke="#000" stroke-width="1"/></svg>
<svg class="a" style="left:793px;top:188px" width="17" height="15" viewBox="0 0 17 15"><path d="M0.5 6 H6 L7 5 H10 V7 H3.5 L0.5 13.5 Z" fill="#ffff80" stroke="#000" stroke-width="1"/><path d="M3.5 7.5 H16 L13 13.5 H0.5 Z" fill="#808000" stroke="#000" stroke-width="1"/><path d="M9 3 C10 0.5 13 0.5 14 2.5 L14 4.5 M12.5 3.5 L14 5 L15.5 3.5" fill="none" stroke="#000" stroke-width="1"/></svg>
<svg class="a" style="left:816px;top:188px" width="15" height="15" viewBox="0 0 15 15"><rect x="0.5" y="0.5" width="14" height="14" fill="#808000" stroke="#000"/><rect x="3" y="1" width="9" height="6" fill="#fff"/><rect x="3" y="9" width="9" height="5" fill="#000"/><rect x="8.5" y="10" width="2" height="3" fill="#fff"/><rect x="11" y="1" width="2" height="2" fill="#000"/></svg>
<svg class="a" style="left:838px;top:188px" width="18" height="15" viewBox="0 0 18 15"><path d="M4.5 0.5 H13 V5 H4.5 Z" fill="#fff" stroke="#000"/><path d="M1 6 C1 4.5 2 4 4 4 H14 C16 4 17 5 17 7 V12 C17 13.5 16 14 14 14 H4 C2 14 1 13.5 1 12 Z" fill="#fff" stroke="#000"/><path d="M1 9.5 H17 M6 2 H11 M6 3.3 H11" stroke="#000" stroke-width="1"/><rect x="8" y="11" width="4" height="1.3" fill="#dd0"/></svg>
<svg class="a" style="left:868px;top:189px" width="14" height="15" viewBox="0 0 14 15"><rect x="0.5" y="0.5" width="13" height="14" fill="#fff" stroke="#808080"/><rect x="1" y="1" width="12" height="3" fill="#000080"/><rect x="2" y="2" width="4" height="1" fill="#fff"/><rect x="7" y="2" width="1" height="1" fill="#fff"/><path d="M2 7 H11 M2 9.5 H11 M2 12 H11" stroke="#e0e0e0" stroke-width="1"/></svg>
<svg class="a" style="left:897px;top:188px" width="16" height="17" viewBox="0 0 16 17"><path d="M3 1.5 H13 V7.5 H3 Z" fill="#fff" stroke="#000" stroke-width="1.2"/><path d="M4.5 3.5 H11.5 M4.5 5.5 H11.5" stroke="#000" stroke-width="1"/><path d="M4.5 8 V10.5 H11.5 V8" fill="none" stroke="#000" stroke-width="1.3"/><path d="M0.8 16 V13.8 H3.5 M15.2 16 V13.8 H12.5" fill="none" stroke="#000" stroke-width="1.3"/></svg>
<svg class="a" style="left:919px;top:188px" width="18" height="16" viewBox="0 0 18 16"><rect x="7" y="0.5" width="3.5" height="3" fill="#a0a0a0"/><path d="M3 5.5 C3 4 4 3.5 5 3.5 H13 C14 3.5 15 4 15 5.5 V14 H3 Z" fill="none" stroke="#a0a0a0" stroke-width="1.2"/><path d="M5 8 H13 M5 10 H13 M0 14.5 H18" stroke="#a0a0a0" stroke-width="1.2"/></svg>
<svg class="a" style="left:950px;top:188px" width="13" height="16" viewBox="0 0 13 16"><path d="M2.3 4.8 C2.3 2.2 4.2 1.3 6.3 1.3 C8.8 1.3 10.5 2.6 10.5 4.6 C10.5 6.8 7.2 7.6 6.6 9.8" fill="none" stroke="#000" stroke-width="3.6"/><path d="M2.3 4.8 C2.3 2.2 4.2 1.3 6.3 1.3 C8.8 1.3 10.5 2.6 10.5 4.6 C10.5 6.8 7.2 7.6 6.6 9.8" fill="none" stroke="#ff0" stroke-width="1.6"/><circle cx="6.6" cy="13" r="2" fill="#ff0" stroke="#000" stroke-width="1.1"/></svg>
<svg class="a" style="left:972px;top:188px" width="16" height="15" viewBox="0 0 16 15"><path d="M1 1 L1 12 L3.5 9.5 L6 14.5 L8 13.5 L5.5 8.5 L9 8.5 Z" fill="#000"/><path d="M8 4 C8 1.5 9.5 0.8 11.5 0.8 C13.5 0.8 15 2 15 3.8 C15 6 12 6.5 12 8.8" fill="none" stroke="#000080" stroke-width="2"/><rect x="10.8" y="10.5" width="2.5" height="2.3" fill="#000080"/></svg>
<div class="a" style="left:760px;top:209px;width:329px;height:398px;background:#ababab"></div>
<div class="a" style="left:760px;top:209px;width:327px;height:398px;background:#ababab;border-top:2px solid #6a6a6a;border-left:2px solid #6a6a6a"></div>
<div class="a" style="left:762px;top:211px;width:322px;height:395px;background:linear-gradient(#b9c8da 0px,#c9d7e7 20px,#d5e1ef 32px,#d6e2f0 100%);border:2px solid #646464;border-top-width:1px;border-left-width:1px;border-top-left-radius:6px;border-top-right-radius:6px"></div>
<svg class="a" style="left:772px;top:222px" width="15" height="15" viewBox="0 0 15 15"><path d="M0.5 0.5 H14 V11 C13 12 12 12.5 11 12 C9 11 7 13.5 4 13.5 C2.5 13.5 1.5 14 0.5 14.5 Z" fill="#fff" stroke="#000" stroke-width="1"/><text x="1.5" y="5.5" font-size="5" font-family="Liberation Sans" font-weight="bold" fill="#f00">DOC</text><path d="M3 8.5 H11.5 M3 10.5 H10" stroke="#9a9a9a" stroke-width="0.6"/></svg>
<div class="a" style="left:792px;top:222px;font-size:13px;line-height:17px;color:#9d9d9d">Mbslave1</div>
<div class="a" style="left:973px;top:221px;width:32px;height:18px;border:1px solid #8da0ba;border-radius:3px;background:linear-gradient(#c3d0df,#d0dcea)"></div>
<div class="a" style="left:1007px;top:221px;width:32px;height:18px;border:1px solid #8da0ba;border-radius:3px;background:linear-gradient(#c3d0df,#d0dcea)"></div>
<div class="a" style="left:1041px;top:221px;width:32px;height:18px;border:1px solid #8da0ba;border-radius:3px;background:linear-gradient(#c3d0df,#d0dcea)"></div>
<div class="a" style="left:983px;top:229px;width:11px;height:4px;background:#f2f2f2;border:1px solid #555;border-radius:1px"></div>
<div class="a" style="left:1017px;top:226px;width:11px;height:9px;background:#f2f2f2;border:1px solid #555;border-radius:1px"></div><div class="a" style="left:1020px;top:229px;width:5px;height:3px;background:#d0dcea;border:1px solid #555"></div>
<svg class="a" style="left:1051px;top:224px" width="12" height="10" viewBox="0 0 12 10"><path d="M2 1.5 L10 8.5 M10 1.5 L2 8.5" stroke="#555" stroke-width="3.8" stroke-linecap="round"/><path d="M2 1.5 L10 8.5 M10 1.5 L2 8.5" stroke="#f2f2f2" stroke-width="2" stroke-linecap="round"/></svg>
<div class="a" style="left:770px;top:242px;width:303px;height:354px;background:#fff;border-top:2px solid #6a6a6a;border-left:2px solid #6a6a6a;border-bottom:2px solid #6a6a6a;border-right:2px solid #6a6a6a"></div>
<div class="a" style="left:772px;top:243px;font-size:14.8px;line-height:18px;color:#000">ID = 1: F = 03</div>
<div class="a" style="left:772px;top:278px;width:299px;height:2px;background:#6a6a6a"></div>
<div class="a" style="left:772px;top:280px;width:2px;height:314px;background:#a0a0a0"></div>
<div class="a" style="left:772px;top:280px;width:299px;height:1px;background:#a0a0a0"></div>
<div class="a" style="left:774px;top:281px;width:225px;height:24px;background:#f0f0f0"></div>
<div class="a" style="left:791px;top:281px;width:2px;height:25px;background:#6a6a6a"></div>
<div class="a" style="left:774px;top:305px;width:18px;height:1px;background:#6a6a6a"></div>
<div class="a" style="left:793px;top:305px;width:103px;height:1px;background:#d0d0d0"></div>
<div class="a" style="left:895px;top:281px;width:1px;height:25px;background:#fff"></div>
<div class="a" style="left:896px;top:305px;width:104px;height:2px;background:#6a6a6a"></div>
<div class="a" style="left:999px;top:281px;width:1px;height:25px;background:#6a6a6a"></div>
<div class="a" style="left:793px;top:287px;width:100px;text-align:right;font-size:13px;line-height:16px;color:#000">Alias</div>
<div class="a" style="left:896px;top:287px;width:100px;text-align:right;font-size:12.5px;line-height:16px;color:#000">00000</div>
<div class="a" style="left:774px;top:306px;width:17px;height:25px;background:#f0f0f0"></div>
<div class="a" style="left:791px;top:306px;width:1px;height:25px;background:#6a6a6a"></div>
<div class="a" style="left:774px;top:330px;width:18px;height:1px;background:#6a6a6a"></div>
<div class="a" style="left:792px;top:330px;width:208px;height:1px;background:#a8a8a8"></div>
<div class="a" style="left:895px;top:306px;width:1px;height:25px;background:#a8a8a8"></div>
<div class="a" style="left:999px;top:306px;width:1px;height:25px;background:#a8a8a8"></div>
<div class="a" style="left:777px;top:312px;width:15px;text-align:center;font-size:13px;line-height:16px;color:#000">0</div>
<div class="a" style="left:896px;top:311px;width:101px;text-align:right;font-size:12.5px;line-height:16px;color:#000">100</div>
<div class="a" style="left:774px;top:331px;width:17px;height:25px;background:#f0f0f0"></div>
<div class="a" style="left:791px;top:331px;width:1px;height:25px;background:#6a6a6a"></div>
<div class="a" style="left:774px;top:355px;width:18px;height:1px;background:#6a6a6a"></div>
<div class="a" style="left:792px;top:355px;width:208px;height:1px;background:#a8a8a8"></div>
<div class="a" style="left:895px;top:331px;width:1px;height:25px;background:#a8a8a8"></div>
<div class="a" style="left:999px;top:331px;width:1px;height:25px;background:#a8a8a8"></div>
<div class="a" style="left:777px;top:337px;width:15px;text-align:center;font-size:13px;line-height:16px;color:#000">1</div>
<div class="a" style="left:896px;top:336px;width:101px;text-align:right;font-size:12.5px;line-height:16px;color:#000">200</div>
<div class="a" style="left:774px;top:356px;width:17px;height:25px;background:#f0f0f0"></div>
<div class="a" style="left:791px;top:356px;width:1px;height:25px;background:#6a6a6a"></div>
<div class="a" style="left:774px;top:380px;width:18px;height:1px;background:#6a6a6a"></div>
<div class="a" style="left:792px;top:380px;width:208px;height:1px;background:#a8a8a8"></div>
<div class="a" style="left:895px;top:356px;width:1px;height:25px;background:#a8a8a8"></div>
<div class="a" style="left:999px;top:356px;width:1px;height:25px;background:#a8a8a8"></div>
<div class="a" style="left:777px;top:362px;width:15px;text-align:center;font-size:13px;line-height:16px;color:#000">2</div>
<div class="a" style="left:774px;top:381px;width:17px;height:25px;background:#f0f0f0"></div>
<div class="a" style="left:774px;top:381px;width:2px;height:24px;background:#6a6a6a"></div>
<div class="a" style="left:774px;top:381px;width:17px;height:1px;background:#6a6a6a"></div>
<div class="a" style="left:792px;top:405px;width:208px;height:1px;background:#a8a8a8"></div>
<div class="a" style="left:895px;top:381px;width:1px;height:25px;background:#a8a8a8"></div>
<div class="a" style="left:999px;top:381px;width:1px;height:25px;background:#a8a8a8"></div>
<div class="a" style="left:777px;top:387px;width:15px;text-align:center;font-size:13px;line-height:16px;color:#000">3</div>
<div class="a" style="left:774px;top:406px;width:17px;height:25px;background:#f0f0f0"></div>
<div class="a" style="left:791px;top:406px;width:1px;height:25px;background:#6a6a6a"></div>
<div class="a" style="left:774px;top:430px;width:18px;height:1px;background:#6a6a6a"></div>
<div class="a" style="left:792px;top:430px;width:208px;height:1px;background:#a8a8a8"></div>
<div class="a" style="left:895px;top:406px;width:1px;height:25px;background:#a8a8a8"></div>
<div class="a" style="left:999px;top:406px;width:1px;height:25px;background:#a8a8a8"></div>
<div class="a" style="left:777px;top:412px;width:15px;text-align:center;font-size:13px;line-height:16px;color:#000">4</div>
<div class="a" style="left:774px;top:431px;width:17px;height:25px;background:#f0f0f0"></div>
<div class="a" style="left:791px;top:431px;width:1px;height:25px;background:#6a6a6a"></div>
<div class="a" style="left:774px;top:455px;width:18px;height:1px;background:#6a6a6a"></div>
<div class="a" style="left:792px;top:455px;width:208px;height:1px;background:#a8a8a8"></div>
<div class="a" style="left:895px;top:431px;width:1px;height:25px;background:#a8a8a8"></div>
<div class="a" style="left:999px;top:431px;width:1px;height:25px;background:#a8a8a8"></div>
<div class="a" style="left:777px;top:437px;width:15px;text-align:center;font-size:13px;line-height:16px;color:#000">5</div>
<div class="a" style="left:774px;top:456px;width:17px;height:25px;background:#f0f0f0"></div>
<div class="a" style="left:791px;top:456px;width:1px;height:25px;background:#6a6a6a"></div>
<div class="a" style="left:774px;top:480px;width:18px;height:1px;background:#6a6a6a"></div>
<div class="a" style="left:792px;top:480px;width:208px;height:1px;background:#a8a8a8"></div>
<div class="a" style="left:895px;top:456px;width:1px;height:25px;background:#a8a8a8"></div>
<div class="a" style="left:999px;top:456px;width:1px;height:25px;background:#a8a8a8"></div>
<div class="a" style="left:777px;top:462px;width:15px;text-align:center;font-size:13px;line-height:16px;color:#000">6</div>
<div class="a" style="left:774px;top:481px;width:17px;height:25px;background:#f0f0f0"></div>
<div class="a" style="left:791px;top:481px;width:1px;height:25px;background:#6a6a6a"></div>
<div class="a" style="left:774px;top:505px;width:18px;height:1px;background:#6a6a6a"></div>
<div class="a" style="left:792px;top:505px;width:208px;height:1px;background:#a8a8a8"></div>
<div class="a" style="left:895px;top:481px;width:1px;height:25px;background:#a8a8a8"></div>
<div class="a" style="left:999px;top:481px;width:1px;height:25px;background:#a8a8a8"></div>
<div class="a" style="left:777px;top:487px;width:15px;text-align:center;font-size:13px;line-height:16px;color:#000">7</div>
<div class="a" style="left:774px;top:506px;width:17px;height:25px;background:#f0f0f0"></div>
<div class="a" style="left:791px;top:506px;width:1px;height:25px;background:#6a6a6a"></div>
<div class="a" style="left:774px;top:530px;width:18px;height:1px;background:#6a6a6a"></div>
<div class="a" style="left:792px;top:530px;width:208px;height:1px;background:#a8a8a8"></div>
<div class="a" style="left:895px;top:506px;width:1px;height:25px;background:#a8a8a8"></div>
<div class="a" style="left:999px;top:506px;width:1px;height:25px;background:#a8a8a8"></div>
<div class="a" style="left:777px;top:512px;width:15px;text-align:center;font-size:13px;line-height:16px;color:#000">8</div>
<div class="a" style="left:774px;top:531px;width:17px;height:25px;background:#f0f0f0"></div>
<div class="a" style="left:791px;top:531px;width:1px;height:25px;background:#6a6a6a"></div>
<div class="a" style="left:774px;top:555px;width:18px;height:1px;background:#6a6a6a"></div>
<div class="a" style="left:792px;top:555px;width:208px;height:1px;background:#a8a8a8"></div>
<div class="a" style="left:895px;top:531px;width:1px;height:25px;background:#a8a8a8"></div>
<div class="a" style="left:999px;top:531px;width:1px;height:25px;background:#a8a8a8"></div>
<div class="a" style="left:777px;top:537px;width:15px;text-align:center;font-size:13px;line-height:16px;color:#000">9</div>
<div class="a" style="left:793px;top:382px;width:101px;height:22px;background:#0078d7"></div>
<div class="a" style="left:760px;top:606px;width:329px;height:21px;background:#f0f0f0;border-top:1px solid #fff"></div>
<div class="a" style="left:965px;top:609px;width:1px;height:17px;background:#d0d0d0"></div>
<div class="a" style="left:762px;top:610px;font-size:12.5px;line-height:16px;color:#000">For Help, press F1.</div>
<div class="a" style="left:970px;top:610px;font-size:12.5px;line-height:16px;color:#000">Port 10: 115200-8</div>
<svg class="a" style="left:1078px;top:616px" width="10" height="10" viewBox="0 0 10 10" fill="#b5b5b5"><rect x="7" y="1" width="2" height="2"/><rect x="4" y="4" width="2" height="2"/><rect x="7" y="4" width="2" height="2"/><rect x="1" y="7" width="2" height="2"/><rect x="4" y="7" width="2" height="2"/><rect x="7" y="7" width="2" height="2"/></svg>
<svg class="a" style="left:0;top:0" width="1733" height="1007" viewBox="0 0 1733 1007"><polygon points="1208.9,686.4 1189.3,651.6 1159.0,598.6 1134.3,556.3 1089.4,478.3 1042.8,397.8 1028.5,372.0 1033.0,371.1 1018.2,362.7 1018.1,379.9 1021.3,376.3 1036.9,401.3 1084.5,481.2 1130.8,558.4 1155.7,600.6 1187.2,652.8 1208.1,687.0" fill="#fd1c15"/></svg>
</body></html>
